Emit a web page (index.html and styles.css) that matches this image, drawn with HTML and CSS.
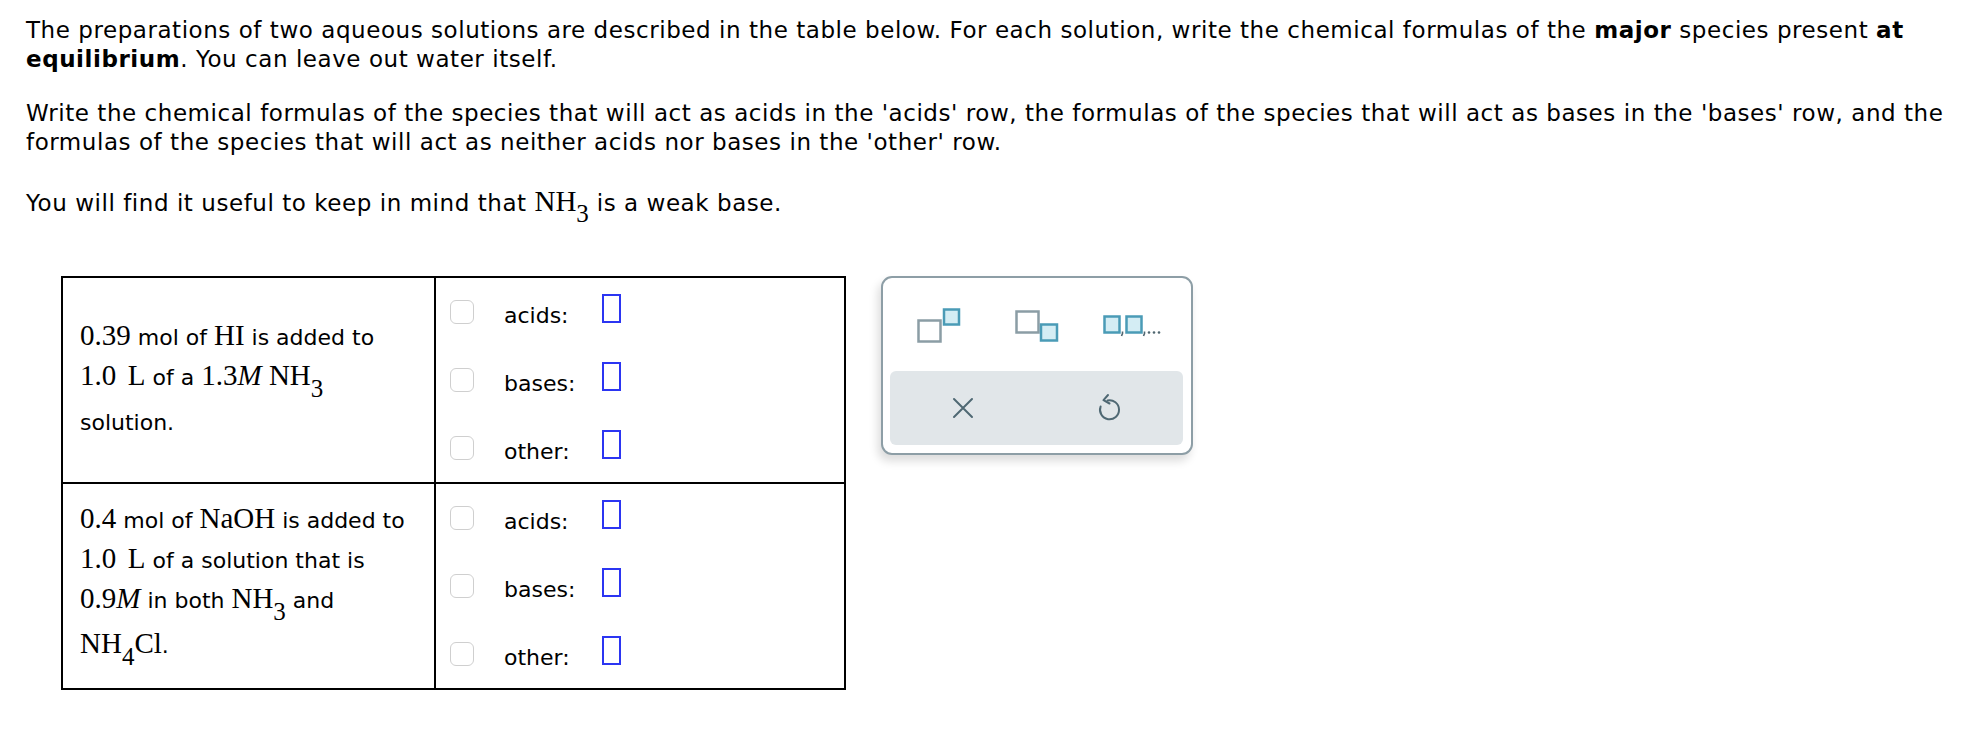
FILE: index.html
```html
<!DOCTYPE html>
<html>
<head>
<meta charset="utf-8">
<link rel="stylesheet" href="styles.css">
</head>
<body>
<div class="page">
  <p class="intro">The preparations of two aqueous solutions are described in the table below. For each solution, write the chemical formulas of the <b>major</b> species present <b>at equilibrium</b>. You can leave out water itself.</p>
  <p class="intro">Write the chemical formulas of the species that will act as acids in the 'acids' row, the formulas of the species that will act as bases in the 'bases' row, and the formulas of the species that will act as neither acids nor bases in the 'other' row.</p>
  <p class="intro hint">You will find it useful to keep in mind that <span class="m">NH<sub>3</sub></span> is a weak base.</p>

  <div class="work">
    <table class="grid">
      <tr>
        <td class="desc"><span class="m">0.39</span> mol of <span class="m">HI</span> is added to <span class="m">1.0&#8201;&#8201;L</span> of a <span class="m">1.3<i>M</i> NH<sub>3</sub></span> solution.</td>
        <td class="answers">
          <div class="ans"><span class="chk"></span><span class="lbl">acids:</span><span class="slot"></span></div>
          <div class="ans"><span class="chk"></span><span class="lbl">bases:</span><span class="slot"></span></div>
          <div class="ans"><span class="chk"></span><span class="lbl">other:</span><span class="slot"></span></div>
        </td>
      </tr>
      <tr>
        <td class="desc"><span class="m">0.4</span> mol of <span class="m">NaOH</span> is added to <span class="m">1.0&#8201;&#8201;L</span> of a solution that is <span class="m">0.9<i>M</i></span> in both <span class="m">NH<sub>3</sub></span> and <span class="m">NH<sub>4</sub>Cl</span>.</td>
        <td class="answers">
          <div class="ans"><span class="chk"></span><span class="lbl">acids:</span><span class="slot"></span></div>
          <div class="ans"><span class="chk"></span><span class="lbl">bases:</span><span class="slot"></span></div>
          <div class="ans"><span class="chk"></span><span class="lbl">other:</span><span class="slot"></span></div>
        </td>
      </tr>
    </table>

    <div class="palette">
      <div class="tools">
        <div class="tool">
          <svg width="44" height="35" viewBox="0 0 44 35">
            <rect x="1.5" y="12.5" width="22" height="21" class="g"/>
            <rect x="27" y="1.5" width="15" height="15" class="b"/>
          </svg>
        </div>
        <div class="tool">
          <svg width="44" height="32" viewBox="0 0 44 32">
            <rect x="1.5" y="1.5" width="22" height="21" class="g"/>
            <rect x="26" y="14.5" width="16" height="16" class="b"/>
          </svg>
        </div>
        <div class="tool">
          <svg width="62" height="22" viewBox="0 0 62 22">
            <rect x="1.5" y="1.5" width="15" height="16" class="b"/>
            <path d="M19.5 16.5 L19.5 18.5 L18.5 21" class="c"/>
            <rect x="23.5" y="1.5" width="15" height="16" class="b"/>
            <path d="M41.5 16.5 L41.5 18.5 L40.5 21" class="c"/>
            <circle cx="46" cy="17.5" r="1.3" class="d"/>
            <circle cx="51" cy="17.5" r="1.3" class="d"/>
            <circle cx="56" cy="17.5" r="1.3" class="d"/>
          </svg>
        </div>
      </div>
      <div class="actions">
        <div class="act">
          <svg width="22" height="22" viewBox="0 0 22 22">
            <path d="M2 2 L20 20 M20 2 L2 20" class="x"/>
          </svg>
        </div>
        <div class="act">
          <svg width="26" height="30" viewBox="0 0 26 30">
            <path d="M10.5 7.5 A9.5 9.5 0 1 1 3.6 13.5" class="x"/>
            <path d="M11 2 L6.5 7.2 L12.5 10.5" class="x"/>
          </svg>
        </div>
      </div>
    </div>
  </div>
</div>
</body>
</html>
```

FILE: styles.css
```css
html, body {
  margin: 0;
  padding: 0;
  background: #fff;
}

.page {
  padding: 16px 10px 40px 26px;
  font-family: "DejaVu Sans", Verdana, sans-serif;
  font-size: 23px;
  letter-spacing: 0.55px;
  color: #000;
}

.intro {
  margin: 0 0 25px 0;
  line-height: 29px;
}

.intro.hint {
  margin-top: 30px;
  margin-bottom: 0;
}

.m {
  font-family: "Liberation Serif", "Times New Roman", serif;
  font-size: 29px;
  letter-spacing: 0;
}

.m i {
  font-style: italic;
}

sub {
  font-size: 25px;
  vertical-align: -11px;
  line-height: 0;
}

.work {
  display: flex;
  align-items: flex-start;
  gap: 35px;
  margin-top: 58px;
  margin-left: 35px;
  letter-spacing: 0;
}

.grid {
  border-collapse: collapse;
  border: 2px solid #000;
}

.grid td {
  border: 2px solid #000;
  padding: 0;
  vertical-align: middle;
  height: 203px;
  box-sizing: border-box;
}

.desc {
  width: 373px;
  padding: 0 14px 0 17px !important;
  font-size: 22px;
  line-height: 40px;
}

.desc .m {
  line-height: 30px;
}

.desc sub {
  line-height: 29px;
  vertical-align: -12px;
}

.answers {
  width: 410px;
  padding: 0 0 0 14px !important;
  font-size: 22px;
}

.ans {
  display: flex;
  align-items: center;
  height: 68px;
}

.chk {
  width: 24px;
  height: 24px;
  box-sizing: border-box;
  border: 1.5px solid #cfcfcf;
  border-radius: 6px;
  background: #fff;
  margin-right: 30px;
}

.lbl {
  width: 98px;
  position: relative;
  top: 3px;
}

.slot {
  width: 19px;
  height: 29px;
  box-sizing: border-box;
  border: 2px solid #2b35f2;
  position: relative;
  top: -4px;
}

.palette {
  width: 312px;
  height: 179px;
  box-sizing: border-box;
  border: 2px solid #8d9ea6;
  border-radius: 11px;
  box-shadow: -3px 6px 10px rgba(0, 0, 0, 0.14);
  padding: 0 8px 8px 7px;
  display: flex;
  flex-direction: column;
  background: #fff;
}

.tools {
  flex: 1;
  display: flex;
  align-items: center;
  padding-top: 2px;
}

.tool {
  flex: 1;
  display: flex;
  justify-content: center;
  align-items: center;
}

.actions {
  height: 74px;
  background: #e1e6e9;
  border-radius: 6px;
  display: flex;
}

.act {
  flex: 1;
  display: flex;
  justify-content: center;
  align-items: center;
}

svg {
  display: block;
}

.g {
  fill: #fff;
  stroke: #8b9da5;
  stroke-width: 2.5;
}

.b {
  fill: #d4edf4;
  stroke: #4a9bb6;
  stroke-width: 2.5;
}

.c {
  fill: none;
  stroke: #4f6670;
  stroke-width: 1.6;
}

.d {
  fill: #4f6670;
}

.x {
  fill: none;
  stroke: #4f6873;
  stroke-width: 2;
  stroke-linecap: round;
  stroke-linejoin: round;
}
```
